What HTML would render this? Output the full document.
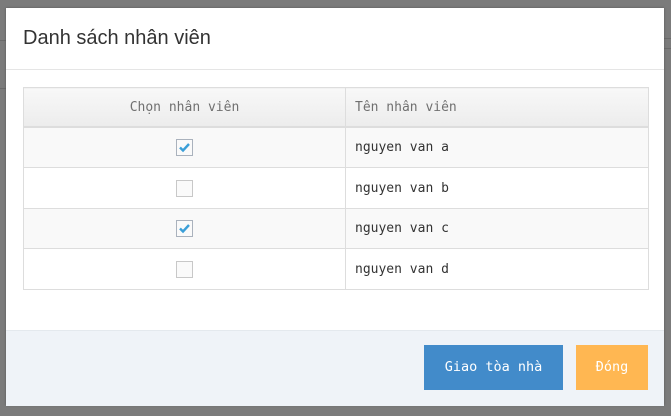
<!DOCTYPE html>
<html><head><meta charset="utf-8"><style>
body{margin:0;width:671px;height:416px;background:#7b7b7b;position:relative;overflow:hidden;font-family:"DejaVu Sans Mono","Liberation Mono",monospace}
.ln{position:absolute;background:#6a6a6a}
.modal{position:absolute;left:6px;top:8px;width:658px;height:397px;background:#fff;box-shadow:0 0 2px #555}
.hd{position:absolute;left:0;top:0;width:658px;height:61px;border-bottom:1px solid #e5e5e5}
.hd h4{margin:0;position:absolute;left:17px;top:19px;font:20px "Liberation Sans",sans-serif;color:#333}
table{position:absolute;left:17px;top:79px;width:626px;border-collapse:collapse;font-size:13px}
td,th{border:1px solid #ddd;height:39px;padding:0 9px}
tr.t td{height:40px}
th{height:38px;background:linear-gradient(#f8f8f8,#ececec);color:#707070;font-weight:normal;border-bottom:2px solid #ddd}
th.c1{text-align:center;width:303px}
th.c2{text-align:left}
td.c2{text-align:left;color:#333}
tr.o td{background:#f9f9f9}
td.c1{text-align:center}
.cb{display:inline-block;width:15px;height:15px;border:1px solid #c8c8c8;background:#fafafa;vertical-align:middle;position:relative}
.cb.on{border-color:#aab2bd}
.cb.on svg{position:absolute;left:1px;top:1px}
.ft{position:absolute;left:0;top:322px;width:658px;height:75px;background:#eff3f8;border-top:1px solid #e4e9ee}
.b{position:absolute;top:14px;height:45px;color:#fff;font-size:13.5px;line-height:45px;text-align:center}
</style></head><body>
<div class="ln" style="left:0;top:40px;width:6px;height:1px"></div>
<div class="ln" style="left:664px;top:38px;width:7px;height:1px"></div>
<div class="ln" style="left:0;top:88px;width:6px;height:1px"></div>
<div class="ln" style="left:664px;top:48px;width:7px;height:1px"></div>
<div class="modal">
<div class="hd"><h4>Danh sách nhân viên</h4></div>
<table>
<tr><th class="c1">Chọn nhân viên</th><th class="c2">Tên nhân viên</th></tr>
<tr class="o"><td class="c1"><span class="cb on"><svg width="13" height="13" viewBox="0 0 13 13"><path d="M2 6.5 L5 9.5 L11 3" stroke="#3b9fd8" stroke-width="2.4" fill="none"/></svg></span></td><td class="c2">nguyen van a</td></tr>
<tr class="t"><td class="c1"><span class="cb"></span></td><td class="c2">nguyen van b</td></tr>
<tr class="o"><td class="c1"><span class="cb on"><svg width="13" height="13" viewBox="0 0 13 13"><path d="M2 6.5 L5 9.5 L11 3" stroke="#3b9fd8" stroke-width="2.4" fill="none"/></svg></span></td><td class="c2">nguyen van c</td></tr>
<tr class="t"><td class="c1"><span class="cb"></span></td><td class="c2">nguyen van d</td></tr>
</table>
<div class="ft">
<div class="b" style="left:418px;width:139px;background:#428bca">Giao tòa nhà</div>
<div class="b" style="left:570px;width:72px;background:#ffb752">Đóng</div>
</div>
</div>
</body></html>
